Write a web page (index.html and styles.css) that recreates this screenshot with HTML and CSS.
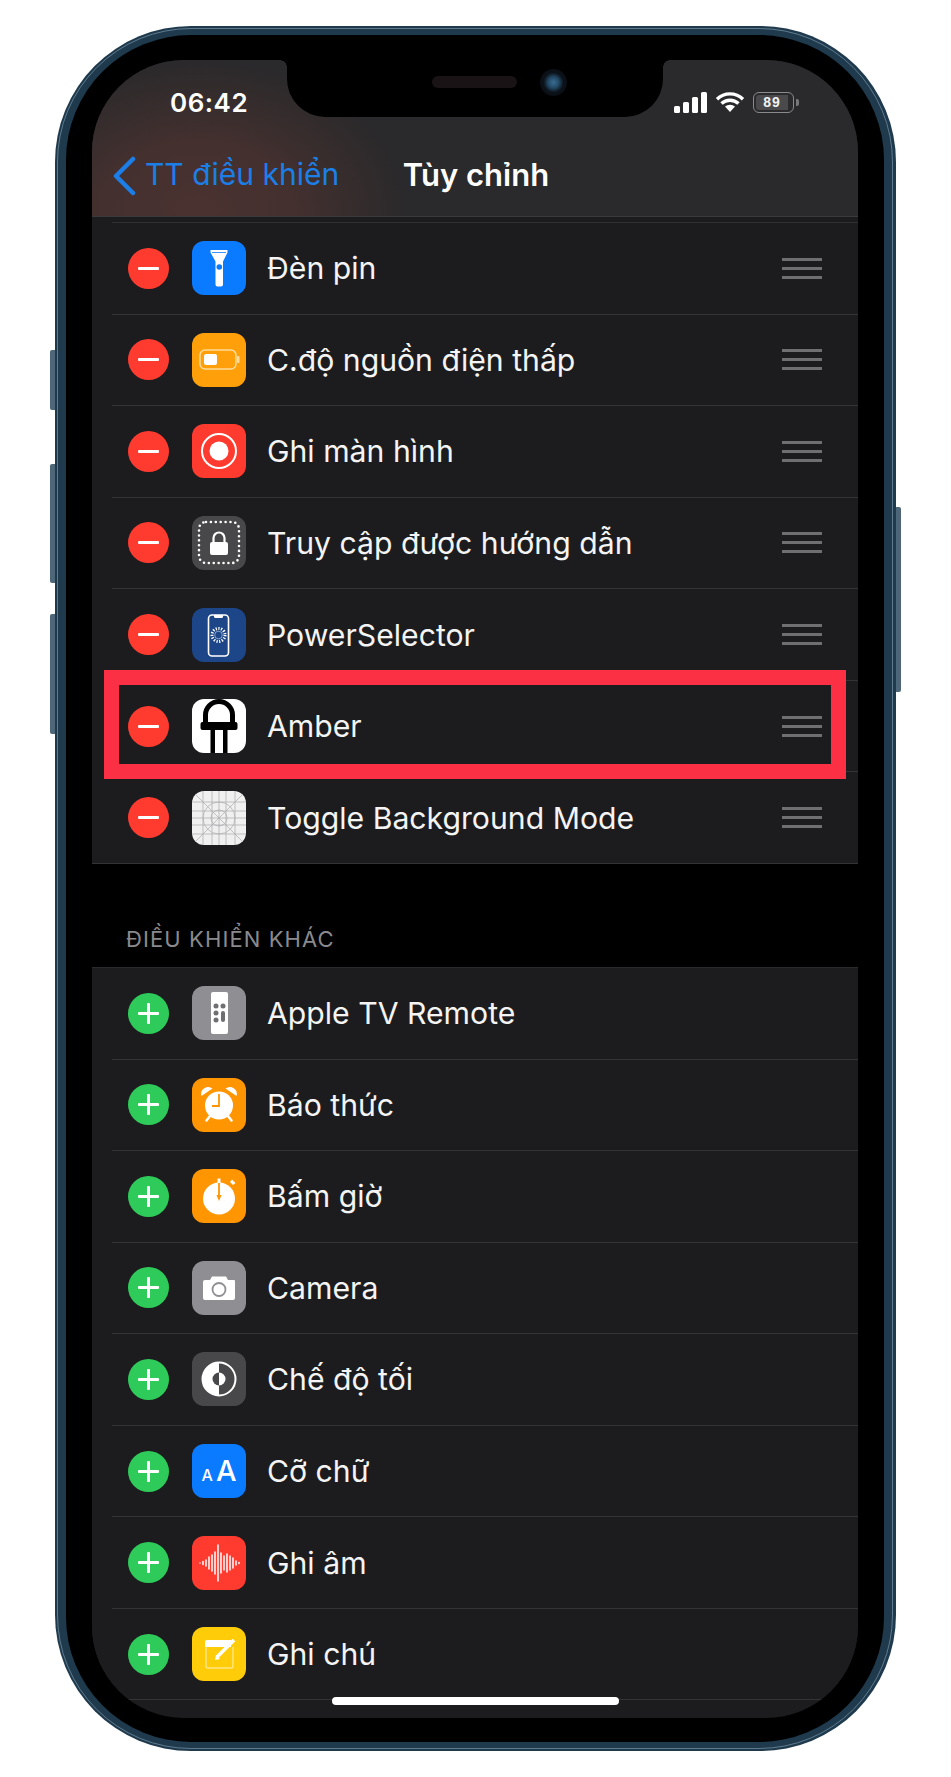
FILE: index.html
```html
<!DOCTYPE html>
<html lang="vi">
<head>
<meta charset="utf-8">
<title>Tùy chỉnh</title>
<link rel="stylesheet" href="styles.css">
</head>
<body>
<main class="stage">
  <div class="phone">
    <span class="btn btn-mute"></span>
    <span class="btn btn-up"></span>
    <span class="btn btn-down"></span>
    <span class="btn btn-power"></span>
    <div class="bezel">
      <div class="screen">
        <div class="notch"><span class="speaker"></span><span class="camera"></span></div>
        <header class="navbar">
          <div class="status">
            <span class="time">06:42</span>
            <div class="status-icons">
              <svg class="ic-signal" width="33" height="21" viewBox="0 0 33 21"><rect x="0" y="14" width="6" height="7" rx="1.5"/><rect x="9" y="10" width="6" height="11" rx="1.5"/><rect x="18" y="5" width="6" height="16" rx="1.5"/><rect x="27" y="0" width="6" height="21" rx="1.5"/></svg>
              <svg class="ic-wifi" width="30" height="22" viewBox="0 0 30 22"><path class="arc" d="M2 8.2a18.6 18.6 0 0 1 26 0M6.5 12.6a12.3 12.3 0 0 1 17 0"/><path class="wedge" d="M10 15.6a7.4 7.4 0 0 1 10 0L15 21z"/></svg>
              <div class="battery"><span class="battery-body"><span class="battery-fill">89</span></span><span class="battery-nub"></span></div>
            </div>
          </div>
          <div class="navrow">
            <div class="back">
              <svg width="26" height="40" viewBox="0 0 26 40"><path class="chev" d="M22 3L5 20l17 17"/></svg>
              <span class="back-text">TT điều khiển</span>
            </div>
            <h1 class="title">Tùy chỉnh</h1>
          </div>
        </header>

        <div class="lead"></div>
        <section class="list">
          <div class="row"><span class="badge minus"></span>
            <svg class="icon" viewBox="0 0 54 54"><rect class="bg-blue" width="54" height="54" rx="12"/><path class="w" d="M18.500 9h17v2.500l-4.500 9v23q0 2-2 2h-3.500q-2 0-2-2v-23l-5-9z"/><path class="flash-line" d="M20 11.500h14"/><circle class="bl" cx="27.300" cy="26" r="2.800"/></svg>
            <span class="label">Đèn pin</span><span class="grip"></span></div>
          <div class="row"><span class="badge minus"></span>
            <svg class="icon" viewBox="0 0 54 54"><rect class="bg-orange2" width="54" height="54" rx="12"/><rect class="batt-line" x="8" y="17" width="36" height="19" rx="5"/><rect class="w" x="12" y="21" width="13" height="11" rx="2"/><rect class="batt-nub" x="45" y="23" width="2.500" height="7" rx="1"/></svg>
            <span class="label">C.độ nguồn điện thấp</span><span class="grip"></span></div>
          <div class="row"><span class="badge minus"></span>
            <svg class="icon" viewBox="0 0 54 54"><rect class="bg-red" width="54" height="54" rx="12"/><circle class="ring" cx="27" cy="27" r="17"/><circle class="w" cx="27" cy="27" r="9.500"/></svg>
            <span class="label">Ghi màn hình</span><span class="grip"></span></div>
          <div class="row"><span class="badge minus"></span>
            <svg class="icon" viewBox="0 0 54 54"><rect class="bg-dgrey" width="54" height="54" rx="12"/><rect class="dots" x="7" y="6" width="40" height="41" rx="7"/><rect class="w" x="18" y="26" width="18" height="13" rx="2"/><path class="shackle" d="M21.500 26v-4a5.500 5.500 0 0 1 11 0v4"/></svg>
            <span class="label">Truy cập được hướng dẫn</span><span class="grip"></span></div>
          <div class="row"><span class="badge minus"></span>
            <svg class="icon" viewBox="0 0 54 54"><rect class="bg-navy" width="54" height="54" rx="12"/><rect class="ps-frame" x="16.500" y="7" width="20" height="41" rx="3.500"/><path class="w" d="M22 7h9v1.500q0 1.500-1.500 1.500h-6q-1.500 0-1.500-1.500z"/><circle class="sun" cx="26.500" cy="27" r="6.500"/><circle class="sun-in" cx="26.500" cy="27" r="3.800"/></svg>
            <span class="label">PowerSelector</span><span class="grip"></span></div>
          <div class="row row-marked"><span class="badge minus"></span>
            <svg class="icon" viewBox="0 0 54 54"><rect class="bg-white" width="54" height="54" rx="12"/><path class="led" d="M13.500 24v-8a13.500 13.500 0 0 1 27 0v8"/><rect class="k" x="8.500" y="23" width="37" height="8" rx="2"/><path class="k" d="M18.500 30h4.500v24h-4.500zM31 30h4.500v24H31z"/></svg>
            <span class="label">Amber</span><span class="grip"></span></div>
          <div class="row row-last"><span class="badge minus"></span>
            <svg class="icon" viewBox="0 0 54 54"><rect class="bg-paper" width="54" height="54" rx="12"/><path class="gridline" d="M0 11h54M0 20h54M0 27h54M0 34h54M0 43h54M11 0v54M20 0v54M27 0v54M34 0v54M43 0v54M3 3l48 48M51 3L3 51"/><circle class="gridline" cx="27" cy="27" r="8"/><circle class="gridline" cx="27" cy="27" r="16"/></svg>
            <span class="label">Toggle Background Mode</span><span class="grip"></span></div>
        </section>

        <div class="section-head">ĐIỀU KHIỂN KHÁC</div>

        <section class="list list-more">
          <div class="row"><span class="badge plus"></span>
            <svg class="icon" viewBox="0 0 54 54"><rect class="bg-grey" width="54" height="54" rx="12"/><rect class="w" x="19" y="6" width="17" height="42" rx="2"/><g class="remote"><circle cx="24" cy="20" r="2.500"/><circle cx="31" cy="20" r="2.500"/><circle cx="24" cy="27" r="2.500"/><circle cx="24" cy="34" r="2.500"/><rect x="29" y="25" width="4" height="11" rx="2"/></g></svg>
            <span class="label">Apple TV Remote</span></div>
          <div class="row"><span class="badge plus"></span>
            <svg class="icon" viewBox="0 0 54 54"><rect class="bg-orange" width="54" height="54" rx="12"/><path class="w" d="M9.500 18a7 7 0 0 1 11-7.500zM44.500 18a7 7 0 0 0-11-7.500z"/><path class="clock-feet" d="M18 38l-3.500 4.500M36 38l3.500 4.500"/><circle class="w" cx="27" cy="27.500" r="14"/><path class="hand" d="M27 16v12h-7"/></svg>
            <span class="label">Báo thức</span></div>
          <div class="row"><span class="badge plus"></span>
            <svg class="icon" viewBox="0 0 54 54"><rect class="bg-orange" width="54" height="54" rx="12"/><circle class="w" cx="27" cy="29.500" r="16"/><rect class="w" x="25.500" y="9.500" width="3" height="5"/><path class="w" d="M38 13l2-2.500 3.500 3.500-2.500 2z"/><path class="hand" d="M27 14v16"/><path class="hand-tip" d="M24.500 26h5L27 32z"/></svg>
            <span class="label">Bấm giờ</span></div>
          <div class="row"><span class="badge plus"></span>
            <svg class="icon" viewBox="0 0 54 54"><rect class="bg-grey" width="54" height="54" rx="12"/><path class="w" d="M11 21q0-2 2-2h5l2-3.500h14l2 3.500h6q1 0 1 1v17q0 2-2 2H13q-2 0-2-2z"/><circle class="lens" cx="27" cy="28.500" r="6.500"/></svg>
            <span class="label">Camera</span></div>
          <div class="row"><span class="badge plus"></span>
            <svg class="icon" viewBox="0 0 54 54"><rect class="bg-dgrey" width="54" height="54" rx="12"/><circle class="ring" cx="27" cy="27" r="16.500"/><path class="w" d="M27 10.500a16.500 16.500 0 0 0 0 33z"/><path class="dg" d="M27 20.500a6.500 6.500 0 0 0 0 13z"/><path class="w" d="M27 20.500a6.500 6.500 0 0 1 0 13z"/></svg>
            <span class="label">Chế độ tối</span></div>
          <div class="row"><span class="badge plus"></span>
            <svg class="icon" viewBox="0 0 54 54"><rect class="bg-blue" width="54" height="54" rx="12"/><text class="aa-s" x="9.500" y="37">A</text><text class="aa-l" x="24" y="36.500">A</text></svg>
            <span class="label">Cỡ chữ</span></div>
          <div class="row"><span class="badge plus"></span>
            <svg class="icon" viewBox="0 0 54 54"><rect class="bg-red" width="54" height="54" rx="12"/><path class="wave" d="M8 27v0M11 25.500v3M14 24v6M17 21v12M20 19v16M23 16v22M26 9v36M29 17v20M32 20v14M35 18v18M38 20v14M41 22v10M44 25v4M47 26.500v1"/></svg>
            <span class="label">Ghi âm</span></div>
          <div class="row"><span class="badge plus"></span>
            <svg class="icon" viewBox="0 0 54 54"><rect class="bg-yellow" width="54" height="54" rx="12"/><path class="w" d="M15 13h24v7H13v-5q0-2 2-2z"/><path class="note" d="M14 20v19q0 2 2 2h23q2 0 2-2V20"/><path class="pencil" d="M25 30l17-17"/><path class="w" d="M23 33l1-5 4 4z"/></svg>
            <span class="label">Ghi chú</span></div>
        </section>
        <div class="home"></div>
      </div>
    </div>
  </div>
</main>
</body>
</html>
```
FILE: styles.css
```css
* { box-sizing: border-box; margin: 0; padding: 0; }
html, body { background: #fff; }
body { font-family: Inter, "Liberation Sans", sans-serif; }

.stage { width: 951px; height: 1777px; padding: 26px 55px; }

.phone {
  position: relative;
  width: 841px;
  height: 1725px;
  padding: 9px 12px 9px 11px;
  border-radius: 136px;
  background: #1f3a4d;
}
.phone::before {
  content: "";
  position: absolute;
  inset: 2px 3px 2px 2px;
  border: 1.5px solid #5f7a8c;
  border-radius: 134px;
  pointer-events: none;
}
.btn { position: absolute; width: 5px; background: #4d6678; border-radius: 2px 0 0 2px; }
.btn-mute { left: -5px; top: 324px; height: 60px; }
.btn-up { left: -5px; top: 438px; height: 119px; }
.btn-down { left: -5px; top: 588px; height: 120px; }
.btn-power { right: -5px; top: 481px; height: 185px; border-radius: 0 2px 2px 0; }

.bezel {
  position: relative;
  height: 100%;
  padding: 25px 26px 24px;
  background: #000;
  border-radius: 125px;
}
.screen {
  position: relative;
  height: 100%;
  overflow: hidden;
  background: #1c1c1e;
  border-radius: 92px;
}

.notch {
  position: absolute;
  z-index: 1;
  top: 0;
  left: 195px;
  width: 376px;
  height: 57px;
  display: flex;
  align-items: center;
  justify-content: center;
  gap: 23px;
  padding-bottom: 13px;
  padding-left: 49px;
  background: #000;
  border-radius: 0 0 38px 38px;
}
.notch::before, .notch::after {
  content: "";
  position: absolute;
  top: 0;
  width: 7px;
  height: 7px;
}
.notch::before { left: -7px; background: radial-gradient(circle at 0 100%, transparent 6.5px, #000 7px); }
.notch::after { right: -7px; background: radial-gradient(circle at 100% 100%, transparent 6.5px, #000 7px); }
.speaker { width: 85px; height: 12px; border-radius: 6px; background: #1a1315; }
.camera {
  width: 27px; height: 27px; border-radius: 50%;
  background: radial-gradient(circle, #3a6c90 0, #234a66 28%, #0c1219 52%, #070a0e 100%);
}

.navbar {
  height: 157px;
  color: #fff;
  background:
    radial-gradient(ellipse 210px 150px at 105px 150px, #4a3230 0, rgba(74, 50, 48, 0.8) 45%, rgba(42, 41, 43, 0) 100%),
    #2a292b;
  border-bottom: 1px solid #3a3a3c;
}
.status {
  height: 84px;
  display: flex;
  align-items: center;
  justify-content: space-between;
  padding: 0 59px 0 78px;
}
.time { font-size: 26px; font-weight: 600; letter-spacing: 0.5px; }
.status-icons { display: flex; align-items: center; gap: 8px; }
.ic-signal { fill: #fff; }
.arc { fill: none; stroke: #fff; stroke-width: 3.4; }
.wedge { fill: #fff; }
.battery { display: flex; align-items: center; gap: 2px; }
.battery-body { display: block; width: 41px; height: 21px; padding: 2px; border: 1.5px solid #8a8a8c; border-radius: 6px; }
.battery-fill {
  display: block; width: 32px; height: 100%;
  background: #4a4a4c;
  border-radius: 3px 0 0 3px;
  font-size: 14px; line-height: 15px; font-weight: 600;
  letter-spacing: 1px;
  text-align: center;
  color: #f2f2f2;
  font-family: "Liberation Sans", sans-serif;
}
.battery-nub { width: 3px; height: 7px; border-radius: 0 2px 2px 0; background: #77777a; }

.navrow {
  height: 64px;
  display: grid;
  grid-template-columns: 1fr auto 1fr;
  align-items: center;
}
.back {
  display: flex;
  align-items: center;
  gap: 8px;
  padding-left: 19px;
  font-size: 30px;
  color: #1c7fe8;
}
.back-text { margin-bottom: 4px; }
.chev { fill: none; stroke: #1c7fe8; stroke-width: 4.500; stroke-linecap: round; stroke-linejoin: round; }
.title { font-size: 31px; font-weight: 600; color: #fff; margin: 0 0 4px 2px; }

.lead { height: 6px; margin-left: 20px; border-bottom: 1px solid #303032; }
.list { background: #1c1c1e; }
.row {
  position: relative;
  height: 91.57px;
  margin-left: 20px;
  padding: 0 36px 0 16px;
  display: flex;
  align-items: center;
  border-bottom: 1px solid #333335;
}
.row-last { margin-left: 0; padding-left: 36px; }
.row-marked::after {
  content: "";
  position: absolute;
  left: -8.500px;
  right: 12px;
  top: -11px;
  height: 79px;
  border: 15px solid #fb3044;
  pointer-events: none;
}
.badge {
  flex: none;
  width: 41px;
  height: 41px;
  border-radius: 50%;
  display: grid;
  place-items: center;
}
.badge::before, .badge::after { content: ""; grid-area: 1 / 1; background: #fff; border-radius: 1px; }
.badge::before { width: 21px; height: 3px; }
.minus { background: #ff3b30; }
.minus::after { display: none; }
.plus { background: #2fcb5a; }
.plus::after { width: 3px; height: 21px; }

.icon { flex: none; width: 54px; height: 54px; margin-left: 23px; display: block; }
.label { margin-left: 21px; font-size: 30.2px; color: #f4f4f5; flex: 1; white-space: nowrap; }
.grip {
  flex: none;
  width: 40px;
  height: 21px;
  border-top: 3px solid #6f6f72;
  border-bottom: 3px solid #6f6f72;
  display: flex;
  align-items: center;
}
.grip::before { content: ""; display: block; width: 100%; height: 3px; background: #6f6f72; }

.section-head {
  height: 103px;
  background: #000;
  padding: 62px 0 0 34px;
  font-size: 22px;
  letter-spacing: 1.1px;
  line-height: 26px;
  color: #8a8a8e;
}
.list-more { border-top: 1px solid #2a2a2c; }
.list-more .row { padding-right: 0; }

.home {
  position: absolute;
  left: 240px;
  bottom: 13px;
  width: 287px;
  height: 8px;
  border-radius: 4px;
  background: #fff;
}

/* icon parts */
.bg-blue { fill: #0a7aff; }
.bg-orange { fill: #ff9500; }
.bg-orange2 { fill: #ff9f0a; }
.bg-red { fill: #ff3b30; }
.bg-dgrey { fill: #48484a; }
.bg-grey { fill: #8e8e93; }
.bg-navy { fill: #1c4688; }
.bg-white { fill: #fff; }
.bg-paper { fill: #f0f0f0; }
.bg-yellow { fill: #ffcc0a; }
.w { fill: #fff; }
.k { fill: #000; }
.bl { fill: #0a7aff; }
.dg { fill: #48484a; }
.flash-line { fill: none; stroke: #0a7aff; stroke-width: 0.800; }
.batt-line { fill: none; stroke: #ffdc9a; stroke-width: 1.500; }
.batt-nub { fill: #ffdc9a; }
.ring { fill: none; stroke: #fff; stroke-width: 2; }
.dots { fill: none; stroke: #fff; stroke-width: 2.600; stroke-linecap: round; stroke-dasharray: 0 4.900; }
.shackle { fill: none; stroke: #fff; stroke-width: 2.200; }
.ps-frame { fill: none; stroke: #fff; stroke-width: 1.600; }
.sun { fill: none; stroke: #fff; stroke-width: 3; stroke-dasharray: 1.200 1.500; }
.sun-in { fill: none; stroke: #cfe0f5; stroke-width: 0.600; }
.led { fill: none; stroke: #000; stroke-width: 5; }
.gridline { fill: none; stroke: #ababae; stroke-width: 0.700; }
.remote { fill: #6e6e73; }
.clock-feet { fill: none; stroke: #fff; stroke-width: 2.500; stroke-linecap: round; }
.hand { fill: none; stroke: #ff9500; stroke-width: 1.800; }
.hand-tip { fill: #ff9500; }
.lens { fill: none; stroke: #8e8e93; stroke-width: 1.800; }
.aa-s { font-family: Inter, "Liberation Sans", sans-serif; font-weight: 500; font-size: 16px; fill: #fff; }
.aa-l { font-family: Inter, "Liberation Sans", sans-serif; font-weight: 500; font-size: 29px; fill: #fff; }
.wave { fill: none; stroke: #fff; stroke-width: 1.500; stroke-linecap: round; }
.note { fill: none; stroke: #ffe680; stroke-width: 1.500; }
.pencil { fill: none; stroke: #fff; stroke-width: 3.500; }
```
